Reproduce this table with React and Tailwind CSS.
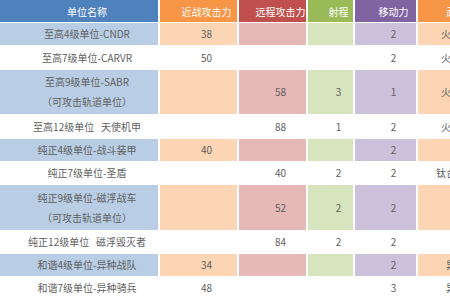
const cols = [
  { w: 'w-[158px]', head: 'bg-[#4f81bd]', body: 'bg-[#b9cde5]' },
  { w: 'w-[77px]', head: 'bg-[#f79646]', body: 'bg-[#fcd5b5]' },
  { w: 'w-[67px]', head: 'bg-[#c0504d]', body: 'bg-[#e6b9b8]' },
  { w: 'w-[45px]', head: 'bg-[#9bbb59]', body: 'bg-[#d7e4bd]' },
  { w: 'w-[61px]', head: 'bg-[#8064a2]', body: 'bg-[#ccc1da]' },
  { w: 'w-[60px]', head: 'bg-[#f79646]', body: 'bg-[#fcd5b5]' },
];

const headers = ['单位名称', '近战攻击力', '远程攻击力', '射程', '移动力', '武器'];

const rows = [
  { h: 'h-[22px]', shaded: true, cells: [['至高4级单位-CNDR'], '38', '', '', '2', '火箭炮'] },
  { h: 'h-[25px]', shaded: false, cells: [['至高7级单位-CARVR'], '50', '', '', '2', '火箭炮'] },
  { h: 'h-[44px]', shaded: true, cells: [['至高9级单位-SABR', '（可攻击轨道单位）'], '', '58', '3', '1', '火箭炮'] },
  { h: 'h-[25px]', shaded: false, cells: [['至高12级单位\u00a0\u00a0\u00a0天使机甲'], '', '88', '1', '2', '火箭炮'] },
  { h: 'h-[22px]', shaded: true, cells: [['纯正4级单位-战斗装甲'], '40', '', '', '2', ''] },
  { h: 'h-[24px]', shaded: false, cells: [['纯正7级单位-圣盾'], '', '40', '2', '2', '钛合金盾'] },
  { h: 'h-[45px]', shaded: true, cells: [['纯正9级单位-磁浮战车', '（可攻击轨道单位）'], '', '52', '2', '2', '无'] },
  { h: 'h-[24px]', shaded: false, cells: [['纯正12级单位\u00a0\u00a0\u00a0磁浮毁灭者'], '', '84', '2', '2', '无'] },
  { h: 'h-[22px]', shaded: true, cells: [['和谐4级单位-异种战队'], '34', '', '', '2', '异种'] },
  { h: 'h-[24px]', shaded: false, cells: [['和谐7级单位-异种骑兵'], '48', '', '', '3', '异种'] },
];

export default function App() {
  return (
    <div
      className="w-[450px] h-[300px] overflow-hidden bg-white text-[10px] text-[#5f5f5f]"
      style={{ fontFamily: '"Noto Sans CJK SC", "Noto Sans", sans-serif' }}
    >
      <div className="flex gap-[2px] h-[22px] mb-[1px]">
        {cols.map((c, i) => (
          <div key={i} className={`${c.w} ${c.head} shrink-0 pl-4 flex items-center justify-center text-white`}>
            <span className="whitespace-nowrap">{headers[i]}</span>
          </div>
        ))}
      </div>
      {rows.map((r, ri) => (
        <div key={ri} className={`flex gap-[2px] ${r.h}`}>
          {cols.map((c, i) => {
            const v = r.cells[i];
            return (
              <div
                key={i}
                className={`${c.w} ${r.shaded ? c.body : 'bg-white'} shrink-0 pl-4 flex flex-col items-center justify-center leading-[20px]`}
              >
                {Array.isArray(v)
                  ? v.map((t, k) => (
                      <span key={k} className="whitespace-nowrap">{t}</span>
                    ))
                  : <span className="whitespace-nowrap">{v}</span>}
              </div>
            );
          })}
        </div>
      ))}
    </div>
  );
}
